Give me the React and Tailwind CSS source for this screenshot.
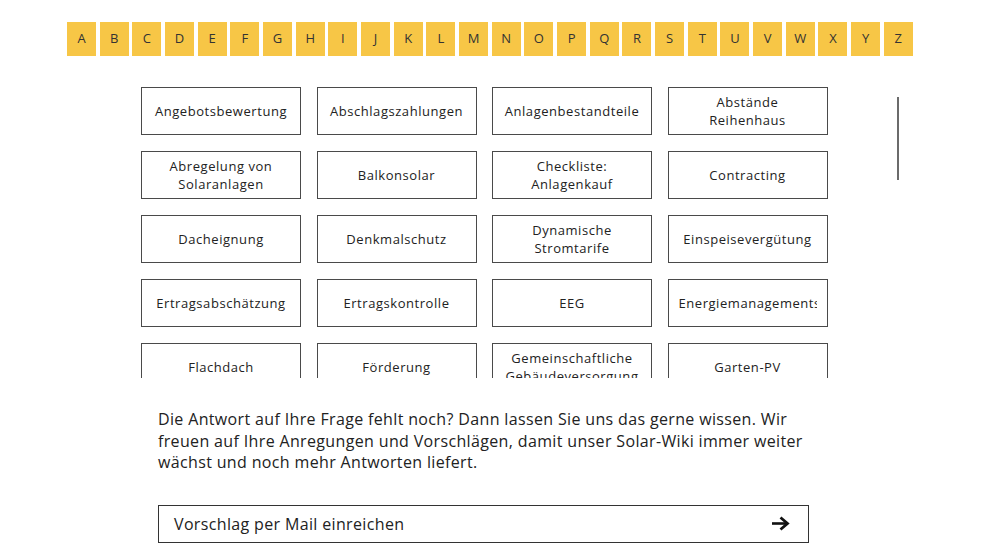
import { useState } from "react";

const letters = "ABCDEFGHIJKLMNOPQRSTUVWXYZ".split("");

const topics = [
  "Angebotsbewertung",
  "Abschlagszahlungen",
  "Anlagenbestandteile",
  "Abstände Reihenhaus",
  "Abregelung von Solaranlagen",
  "Balkonsolar",
  "Checkliste: Anlagenkauf",
  "Contracting",
  "Dacheignung",
  "Denkmalschutz",
  "Dynamische Stromtarife",
  "Einspeisevergütung",
  "Ertragsabschätzung",
  "Ertragskontrolle",
  "EEG",
  "Energiemanagementsysteme",
  "Flachdach",
  "Förderung",
  "Gemeinschaftliche Gebäudeversorgung",
  "Garten-PV",
];

export default function App() {
  const [active, setActive] = useState(null);

  return (
    <div
      className="w-[1000px] h-[552px] bg-white text-[#222] overflow-hidden"
      style={{ fontFamily: '"Open Sans", "DejaVu Sans", sans-serif' }}
    >
      {/* Alphabet */}
      <div className="ml-[67px] mt-[22px] w-[846px] flex justify-between">
        {letters.map((l) => (
          <button
            key={l}
            onClick={() => setActive(l)}
            className={
              "w-[29px] h-[34px] flex items-center justify-center text-[13px] text-[#333] " +
              (active === l ? "bg-[#eab52f]" : "bg-[#f7c646]")
            }
          >
            {l}
          </button>
        ))}
      </div>

      {/* Topics grid */}
      <div className="flex mt-[31px] ml-[141px]">
        <div className="h-[291px] overflow-hidden">
          <div className="grid grid-cols-[160px_160px_160px_160px] gap-x-[15.5px] gap-y-[16px]">
            {topics.map((t) => (
              <a
                key={t}
                href="#"
                className="h-[48px] border border-[#4a4a4a] flex items-center justify-center px-[10px] text-[13px] leading-[18px] text-center tracking-[0.55px]"
              >
                <span className="block w-full overflow-hidden">{t}</span>
              </a>
            ))}
          </div>
        </div>
        <div className="ml-[69px] pt-[10px]">
          <div className="w-[2px] h-[83px] bg-[#6b6b6b]" />
        </div>
      </div>

      {/* Text */}
      <p className="ml-[158px] mt-[31px] w-[651px] text-[16px] leading-[21.5px] tracking-[0.35px] text-[#222]">
        Die Antwort auf Ihre Frage fehlt noch? Dann lassen Sie uns das gerne wissen. Wir
        freuen auf Ihre Anregungen und Vorschlägen, damit unser Solar-Wiki immer weiter
        wächst und noch mehr Antworten liefert.
      </p>

      <a
        href="#"
        className="ml-[158px] mt-[31px] w-[651px] h-[38px] border border-[#333] flex items-center justify-between pl-[15px] pr-[18px] text-[16px] tracking-[0.35px] text-[#222]"
      >
        <span>Vorschlag per Mail einreichen</span>
        <svg width="19" height="15" viewBox="0 0 19 15" fill="none">
          <path d="M1 7.5H15" stroke="#111" strokeWidth="2.6" />
          <path d="M9.5 1.5L16.5 7.5L9.5 13.5" stroke="#111" strokeWidth="2.8" />
        </svg>
      </a>
    </div>
  );
}
